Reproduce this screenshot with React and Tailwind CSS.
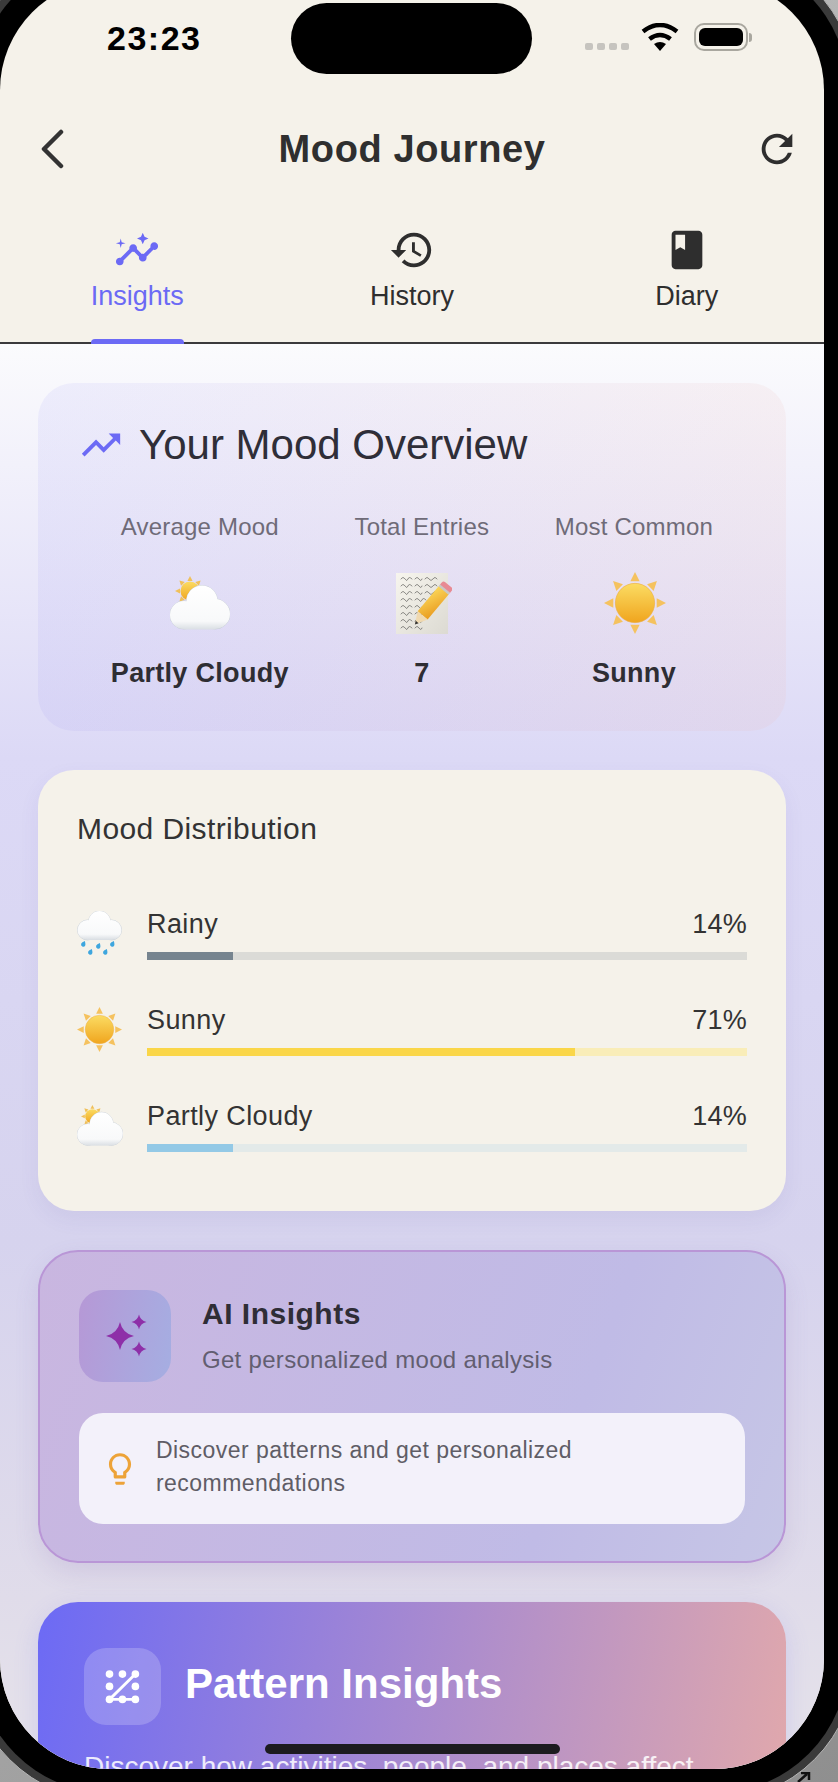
import React from "react";

const Mat = ({ d, className }) => (
  <svg viewBox="0 0 24 24" fill="currentColor" className={className}>
    {(Array.isArray(d) ? d : [d]).map((p, i) => (
      <path key={i} d={p} />
    ))}
  </svg>
);

const ICONS = {
  insights: [
    "M21 8c-1.45 0-2.26 1.44-1.93 2.51l-3.55 3.56c-.3-.09-.74-.09-1.04 0l-2.55-2.55C12.27 10.45 11.46 9 10 9c-1.45 0-2.27 1.44-1.93 2.52l-4.56 4.55C2.44 15.74 1 16.55 1 18c0 1.1.9 2 2 2 1.45 0 2.26-1.44 1.93-2.51l4.55-4.56c.3.09.74.09 1.04 0l2.55 2.55C12.73 16.55 13.54 18 15 18c1.45 0 2.27-1.44 1.93-2.52l3.56-3.55c1.07.33 2.51-.48 2.51-1.93 0-1.1-.9-2-2-2z",
    "M15 9l.94-2.07L18 6l-2.06-.93L15 3l-.92 2.07L12 6l2.08.93z",
    "M3.5 11L4 9l2-.5L4 8l-.5-2L3 8l-2 .5L3 9z",
  ],
  history:
    "M13 3c-4.97 0-9 4.03-9 9H1l3.89 3.89.07.14L9 12H6c0-3.87 3.13-7 7-7s7 3.13 7 7-3.13 7-7 7c-1.93 0-3.68-.79-4.94-2.06l-1.42 1.42C8.27 19.99 10.51 21 13 21c4.97 0 9-4.03 9-9s-4.03-9-9-9zm-1 5v5l4.28 2.54.72-1.21-3.5-2.08V8H12z",
  book: "M18 2H6c-1.1 0-2 .9-2 2v16c0 1.1.9 2 2 2h12c1.1 0 2-.9 2-2V4c0-1.1-.9-2-2-2zM6 4h5v8l-2.5-1.5L6 12V4z",
  refresh:
    "M17.65 6.35C16.2 4.9 14.21 4 12 4c-4.42 0-7.99 3.58-7.99 8s3.57 8 7.99 8c3.73 0 6.84-2.55 7.73-6h-2.08c-.82 2.33-3.04 4-5.65 4-3.31 0-6-2.69-6-6s2.69-6 6-6c1.66 0 3.14.69 4.22 1.78L13 11h7V4l-2.35 2.35z",
  trending: "M16 6l2.29 2.29-4.88 4.88-4-4L2 16.59 3.41 18l6-6 4 4 6.3-6.29L22 12V6z",
  bulb: "M9 21c0 .55.45 1 1 1h4c.55 0 1-.45 1-1v-1H9v1zm3-19C8.14 2 5 5.14 5 9c0 2.38 1.19 4.47 3 5.74V17c0 .55.45 1 1 1h6c.55 0 1-.45 1-1v-2.26c1.81-1.27 3-3.36 3-5.74 0-3.86-3.14-7-7-7zm2.85 11.1l-.85.6V16h-4v-2.3l-.85-.6C7.8 12.16 7 10.63 7 9c0-2.76 2.24-5 5-5s5 2.24 5 5c0 1.63-.8 3.16-2.15 4.1z",
};

const Rays = ({ cx, cy, inner, outer, w, fill }) => (
  <g fill={fill}>
    {[0, 45, 90, 135, 180, 225, 270, 315].map((a) => (
      <polygon
        key={a}
        points={`${cx - w},${cy - inner} ${cx + w},${cy - inner} ${cx},${cy - outer}`}
        transform={`rotate(${a} ${cx} ${cy})`}
      />
    ))}
  </g>
);

const SunEmoji = ({ id, className }) => (
  <svg viewBox="0 0 60 60" className={className}>
    <defs>
      <linearGradient id={id} x1="0" y1="0" x2="0" y2="1">
        <stop offset="0" stopColor="#fbdc63" />
        <stop offset="1" stopColor="#f0a51e" />
      </linearGradient>
    </defs>
    <Rays cx={30} cy={30} inner={21} outer={30} w={4.5} fill="#f5c25f" />
    <circle cx="30" cy="30" r="19" fill={`url(#${id})`} stroke="#ecae45" strokeWidth="0.6" />
  </svg>
);

const CloudGrad = ({ id, y1, y2 }) => (
  <linearGradient id={id} gradientUnits="userSpaceOnUse" x1="0" y1={y1} x2="0" y2={y2}>
    <stop offset="0" stopColor="#ffffff" />
    <stop offset="0.8" stopColor="#f8f9fa" />
    <stop offset="1" stopColor="#d8dde2" />
  </linearGradient>
);

const PartlyEmoji = ({ id, className }) => (
  <svg viewBox="0 0 60 54" className={className}>
    <defs>
      <CloudGrad id={`${id}c`} y1={10} y2={54} />
      <linearGradient id={`${id}s`} x1="0" y1="0" x2="0" y2="1">
        <stop offset="0" stopColor="#fbdc63" />
        <stop offset="1" stopColor="#f0a51e" />
      </linearGradient>
    </defs>
    <Rays cx={20} cy={15} inner={10} outer={15} w={2.6} fill="#f0c05a" />
    <circle cx="20" cy="15" r="9.500" fill={`url(#${id}s)`} />
    <g fill="#c9d0d8" stroke="#c9d0d8" strokeWidth="1">
      <circle cx="32" cy="25" r="15.500" />
      <circle cx="14" cy="39" r="14" />
      <circle cx="45" cy="38" r="15" />
    </g>
    <g fill={`url(#${id}c)`}>
      <circle cx="32" cy="25" r="15.500" />
      <circle cx="14" cy="39" r="14" />
      <circle cx="45" cy="38" r="15" />
      <rect x="14" y="30" width="31" height="23.500" />
    </g>
  </svg>
);

const RainyEmoji = ({ id, className }) => (
  <svg viewBox="0 0 44 45" className={className}>
    <defs>
      <CloudGrad id={id} y1={0} y2={29} />
    </defs>
    <g fill="#c9d0d8" stroke="#c9d0d8" strokeWidth="0.8">
      <circle cx="22" cy="11" r="11" />
      <circle cx="10" cy="19" r="10" />
      <circle cx="34" cy="19" r="10" />
    </g>
    <g fill={`url(#${id})`}>
      <circle cx="22" cy="11" r="11" />
      <circle cx="10" cy="19" r="10" />
      <circle cx="34" cy="19" r="10" />
      <rect x="10" y="14" width="24" height="15" />
    </g>
    <g fill="#3ea6de">
      {[
        [6, 33],
        [13, 41],
        [21, 35],
        [28, 41],
        [35, 33],
      ].map(([x, y]) => (
        <path
          key={x}
          transform={`rotate(25 ${x} ${y})`}
          d={`M${x} ${y - 3.2}c1.4 1.8 2.2 2.8 2.2 3.8a2.2 2.2 0 1 1-4.4 0c0-1 .8-2 2.2-3.8z`}
        />
      ))}
    </g>
  </svg>
);

const MemoEmoji = ({ id, className }) => (
  <svg viewBox="0 0 56 61" className={className}>
    <defs>
      <linearGradient id={`${id}p`} x1="0" y1="0" x2="1" y2="1">
        <stop offset="0" stopColor="#f7f5ee" />
        <stop offset="1" stopColor="#dcdad2" />
      </linearGradient>
      <linearGradient id={`${id}y`} x1="0" y1="0" x2="1" y2="1">
        <stop offset="0" stopColor="#fbd75a" />
        <stop offset="1" stopColor="#e99c1f" />
      </linearGradient>
    </defs>
    <rect x="0" y="0" width="52" height="61" fill={`url(#${id}p)`} />
    <g fill="none" stroke="#4a4a48" strokeWidth="0.6" strokeLinecap="round">
      {[6, 13, 20, 27, 34, 41, 48, 55].map((y, i) => (
        <path
          key={y}
          d={`M5 ${y}q2 -3 4 0t3 0t4 0m3 0q2 -3 4 0t3 0${i < 3 ? "m3 0q2 -3 4 0t4 0t4 0" : i < 4 ? "t4 0" : ""}`}
        />
      ))}
    </g>
    <g transform="rotate(40 36 32)">
      <rect x="29" y="13" width="13" height="33" fill={`url(#${id}y)`} />
      <rect x="29" y="6" width="13" height="7" rx="2.5" fill="#e88a93" />
      <rect x="29" y="11" width="13" height="2.5" fill="#c9c9c4" />
      <polygon points="29,46 42,46 35.5,58" fill="#f0d9b0" />
      <polygon points="33.6,54.5 37.4,54.5 35.5,58" fill="#333" />
    </g>
  </svg>
);

const Star = ({ x, y, r }) => {
  const k = r * 0.18;
  return (
    <path
      d={`M${x} ${y - r}Q${x + k} ${y - k} ${x + r} ${y}Q${x + k} ${y + k} ${x} ${y + r}Q${x - k} ${y + k} ${x - r} ${y}Q${x - k} ${y - k} ${x} ${y - r}Z`}
    />
  );
};

const Tab = ({ icon, label, active }) => (
  <div className="relative flex flex-1 flex-col items-center">
    <Mat d={ICONS[icon]} className={`h-[46px] w-[46px] ${active ? "text-[#6c6af5]" : "text-[#2e2e2e]"}`} />
    <span className={`mt-[5px] text-[27px] leading-[36px] ${active ? "text-[#6c6af5]" : "text-[#2e2e2e]"}`}>{label}</span>
  </div>
);

const Stat = ({ label, value, children }) => (
  <div className="flex flex-col items-center">
    <span className="text-[24px] leading-[28px] tracking-[0.2px] text-[#6f6b78]">{label}</span>
    <div className="mt-[31px] flex h-[62px] items-center justify-center">{children}</div>
    <span className="mt-[23px] text-[27px] font-bold leading-[32px] tracking-[0.3px] text-[#2e2d33]">{value}</span>
  </div>
);

const MoodRow = ({ emoji, label, pct, fill, track, width }) => (
  <div className="flex items-center">
    <div className="flex w-[70px] shrink-0 items-center">{emoji}</div>
    <div className="flex-1">
      <div className="flex items-center justify-between text-[27px] leading-[36px] tracking-[0.4px] text-[#333333]">
        <span>{label}</span>
        <span className="tracking-[0.2px]">{pct}</span>
      </div>
      <div className={`mt-[10px] h-[8px] w-full ${track}`}>
        <div className={`h-full ${fill}`} style={{ width }} />
      </div>
    </div>
  </div>
);

export default function App() {
  return (
    <div
      className="relative h-[1782px] w-[838px] overflow-hidden bg-[linear-gradient(135deg,#c9c9c9,#8f8f8f)]"
      style={{ fontFamily: '"Liberation Sans", Arial, sans-serif' }}
    >
      {/* device frame */}
      <div className="-ml-[33px] -mt-[53px] w-[890px] rounded-[144px] border border-[#b5b5b5] bg-[#3a3a3a] p-[8px]">
        <div className="rounded-[134px] bg-black p-[24px]">
          <div className="relative h-[1789px] w-[824px] overflow-hidden rounded-[110px] bg-[#f5f2ea]">
            {/* dynamic island */}
            <div className="absolute left-[291px] top-[23px] h-[71px] w-[241px] rounded-[36px] bg-black" />
            {/* home indicator */}
            <div className="absolute bottom-[15px] left-[265px] z-10 h-[10px] w-[295px] rounded-full bg-[#1c1b1f]" />

            {/* status bar */}
            <div className="flex h-[96px] items-start justify-between pl-[107px] pr-[72px] pt-[38px]">
              <span className="text-[34px] font-bold leading-[40px] tracking-[1.5px] text-black">23:23</span>
              <div className="flex items-start pt-[5px]">
                <div className="mt-[20px] flex gap-[4px]">
                  {[0, 1, 2, 3].map((i) => (
                    <span key={i} className="h-[7px] w-[8px] rounded-[2px] bg-[#c6c4bf]" />
                  ))}
                </div>
                <svg viewBox="0 0 40 28" className="ml-[11px] h-[28px] w-[40px]">
                  <path d="M20 28l-6-7q6-4 12 0z" fill="#000" />
                  <path d="M9.500 16q10.500-8 21 0" fill="none" stroke="#000" strokeWidth="4.500" />
                  <path d="M3 8.500q17-13 34 0" fill="none" stroke="#000" strokeWidth="4.500" />
                </svg>
                <div className="ml-[14px] flex items-center">
                  <div className="h-[28px] w-[54px] rounded-[10px] border-[2.5px] border-[#a9a79f] p-[3px]">
                    <div className="h-full w-full rounded-[6px] bg-black" />
                  </div>
                  <div className="ml-[1px] h-[9px] w-[3px] rounded-r-[3px] bg-[#a9a79f]" />
                </div>
              </div>
            </div>

            {/* app bar */}
            <div className="flex h-[146px] items-center pl-[36px] pr-[24px]">
              <div className="flex flex-1 justify-start">
                <svg viewBox="0 0 30 40" className="h-[40px] w-[30px]" fill="none" stroke="#333" strokeWidth="4.500" strokeLinecap="round" strokeLinejoin="round">
                  <path d="M25 3 L8 20 L25 37" />
                </svg>
              </div>
              <span className="-ml-[12px] text-[38px] font-bold leading-[44px] tracking-[0.6px] text-[#2f2f2f]">Mood Journey</span>
              <div className="flex flex-1 justify-end">
                <Mat d={ICONS.refresh} className="h-[46px] w-[46px] text-[#2e2e2e]" />
              </div>
            </div>

            {/* tabs */}
            <div className="relative flex h-[122px] items-start border-b-2 border-[#3b3a3c] pt-[5px]">
              <Tab icon="insights" label="Insights" active />
              <Tab icon="history" label="History" />
              <Tab icon="book" label="Diary" />
              <div className="absolute -bottom-[2px] left-[91px] h-[5px] w-[93px] rounded-t-[4px] bg-[#6c6af5]" />
            </div>

            {/* body */}
            <div className="flex h-[1425px] flex-col gap-[39px] overflow-hidden bg-[linear-gradient(180deg,#fbfbfd_0%,#dcd9f6_29%,#d6d3ee_63%,#e0dcea_88%,#e6e3ea_100%)] px-[38px] pt-[39px]">
              {/* overview */}
              <div className="h-[348px] shrink-0 rounded-[36px] bg-[linear-gradient(100deg,rgba(108,106,245,0.08),rgba(240,180,170,0.12))] px-[40px] pt-[37px]">
                <div className="flex items-center">
                  <Mat d={ICONS.trending} className="h-[46px] w-[46px] text-[#6c6af5]" />
                  <span className="ml-[15px] text-[42px] leading-[50px] text-[#2f2e38]">Your Mood Overview</span>
                </div>
                <div className="mt-[43px] flex justify-around">
                  <Stat label="Average Mood" value="Partly Cloudy">
                    <PartlyEmoji id="pc1" className="h-[54px] w-[60px]" />
                  </Stat>
                  <Stat label="Total Entries" value="7">
                    <MemoEmoji id="memo" className="ml-[4px] h-[61px] w-[56px]" />
                  </Stat>
                  <Stat label="Most Common" value="Sunny">
                    <SunEmoji id="sun1" className="ml-[2px] h-[62px] w-[62px]" />
                  </Stat>
                </div>
              </div>

              {/* distribution */}
              <div className="h-[441px] shrink-0 rounded-[36px] bg-[#f5f2ea] px-[39px] pt-[40px] shadow-[0_8px_20px_rgba(90,80,160,0.08)]">
                <div className="text-[30px] leading-[38px] tracking-[0.4px] text-[#333333]">Mood Distribution</div>
                <div className="mt-[58px] flex flex-col gap-[42px]">
                  <MoodRow
                    emoji={<RainyEmoji id="rainy" className="h-[45px] w-[45px]" />}
                    label="Rainy"
                    pct="14%"
                    width="14.300%"
                    fill="bg-[#76848f]"
                    track="bg-[#dbdbd7]"
                  />
                  <MoodRow
                    emoji={<SunEmoji id="sun2" className="h-[45px] w-[45px]" />}
                    label="Sunny"
                    pct="71%"
                    width="71.400%"
                    fill="bg-[#fad648]"
                    track="bg-[#f9edb8]"
                  />
                  <MoodRow
                    emoji={<PartlyEmoji id="pc2" className="h-[41px] w-[46px]" />}
                    label="Partly Cloudy"
                    pct="14%"
                    width="14.300%"
                    fill="bg-[#93c9e6]"
                    track="bg-[#e3eae9]"
                  />
                </div>
              </div>

              {/* AI insights */}
              <div className="h-[313px] shrink-0 rounded-[40px] border-2 border-[#b996d6] bg-[linear-gradient(110deg,#c9b6e0,#c0bbe6_70%,#c6c6e6)] px-[39px] pt-[38px] shadow-[0_10px_24px_rgba(120,90,170,0.14)]">
                <div className="flex items-start">
                  <div className="flex h-[92px] w-[92px] shrink-0 items-center justify-center rounded-[24px] bg-[linear-gradient(100deg,#b698d6,#a5aee2)]">
                    <svg viewBox="0 0 46 46" className="h-[46px] w-[46px]" fill="#8e2fa8">
                      <Star x={18} y={23} r={14} />
                      <Star x={37} y={9} r={7.500} />
                      <Star x={37} y={36} r={7.500} />
                    </svg>
                  </div>
                  <div className="ml-[31px] pt-[5px]">
                    <div className="text-[30px] font-bold leading-[38px] tracking-[0.5px] text-[#2f2d36]">AI Insights</div>
                    <div className="mt-[12px] text-[24px] leading-[30px] tracking-[0.3px] text-[#625e70]">Get personalized mood analysis</div>
                  </div>
                </div>
                <div className="mt-[31px] flex h-[111px] items-center rounded-[24px] bg-[#f3f1fa] pl-[22px]">
                  <Mat d={ICONS.bulb} className="h-[38px] w-[38px] shrink-0 text-[#eda338]" />
                  <p className="ml-[17px] pb-[3px] text-[23px] leading-[33px] tracking-[0.45px] text-[#5f5d66]">
                    Discover patterns and get personalized
                    <br />
                    recommendations
                  </p>
                </div>
              </div>

              {/* pattern */}
              <div className="h-[320px] shrink-0 rounded-[40px] bg-[linear-gradient(100deg,#6c6af5,#e4aaaa)] px-[46px] pt-[46px] shadow-[0_8px_24px_rgba(108,106,245,0.18)]">
                <div className="flex items-center">
                  <div className="flex h-[77px] w-[77px] shrink-0 items-center justify-center rounded-[22px] bg-white/20">
                    <svg viewBox="0 0 32 32" className="h-[36px] w-[36px]" fill="#fff" stroke="#fff" strokeWidth="2.500">
                      <path d="M27 4.500 L4 27 H27" fill="none" />
                      {[
                        [4, 4.500],
                        [15.500, 4.500],
                        [27, 4.500],
                        [4, 15.500],
                        [27, 15.500],
                        [4, 27],
                        [15.500, 27],
                        [27, 27],
                      ].map(([x, y]) => (
                        <circle key={`${x}-${y}`} cx={x} cy={y} r="3.400" stroke="none" />
                      ))}
                    </svg>
                  </div>
                  <span className="ml-[24px] pb-[6px] text-[42px] font-bold leading-[50px] text-white">Pattern Insights</span>
                </div>
                <p className="mt-[24px] whitespace-nowrap text-[28px] leading-[36px] text-white/85">Discover how activities, people, and places affect</p>
              </div>
            </div>
          </div>
        </div>
      </div>
      {/* cursor peeking at the window corner */}
      <svg viewBox="0 0 16 10" className="absolute bottom-0 left-[797px] h-[10px] w-[16px]" fill="none" stroke="#111" strokeWidth="2.500">
        <path d="M1 10 L10 2 M4 1 H12 V8" />
      </svg>
    </div>
  );
}
